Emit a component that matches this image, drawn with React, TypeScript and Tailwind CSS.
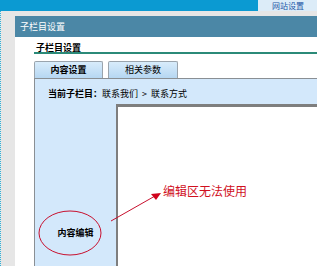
import React from 'react';

const font = { fontFamily: '"Noto Sans CJK SC", "Liberation Sans", sans-serif' };

const App: React.FC = () => {
  return (
    <div className="relative w-[317px] h-[266px] overflow-hidden bg-[#e6e6e6] text-[9px] text-black" style={font}>
      {/* top bar */}
      <div className="flex h-[11px] bg-[#0b9ad2]">
        <div className="flex-1" />
        <div className="w-[59px] bg-[#dcecf8] text-[8px] leading-[11px] text-[#2356a6] pl-[14px]">网站设置</div>
      </div>

      <div className="flex h-[255px]">
        <div className="w-[15px] border-l border-dotted border-[#2fb0d8]" />
        <div className="flex-1 flex flex-col mt-[5px]">
          <div className="h-[21px] bg-[#4b87a6] text-white text-[9px] leading-[21px] pl-[5px]">子栏目设置</div>
          <div className="flex-1 bg-white pl-[19px] flex flex-col">
            <div className="mt-[6px] h-[11px] border-b-2 border-[#2b8a78] text-[9px] font-bold leading-[9px] pl-[2px]">
              子栏目设置
            </div>
            <div className="flex gap-[5px] mt-[7px] h-[17px]">
              <div className="w-[69px] border border-b-0 border-[#9aa4ad] rounded-t-[2px] bg-gradient-to-b from-[#d8ecfb] to-[#b6d7f2] text-center font-bold leading-[16px]">
                内容设置
              </div>
              <div className="w-[70px] border border-b-0 border-[#9aa4ad] rounded-t-[2px] bg-gradient-to-b from-[#d8ecfb] to-[#b6d7f2] text-center leading-[16px]">
                相关参数
              </div>
            </div>
            <div className="flex-1 flex flex-col border-t border-l border-[#8a8f94] bg-[#d3e8fb]">
              <div className="h-[25px] pl-[13px] pt-[10px] leading-[10px]">
                <span className="font-bold">当前子栏目：</span>
                <span>联系我们&nbsp;&nbsp;&gt;&nbsp;&nbsp;联系方式</span>
              </div>
              <div className="flex-1 flex">
                <div className="w-[81px] flex flex-col items-center justify-end pb-[27px]">
                  <span className="font-bold">内容编辑</span>
                </div>
                <div className="flex-1 bg-white border-t-[3px] border-l-[2px] border-[#7e7e7e]" />
              </div>
            </div>
          </div>
        </div>
      </div>

      {/* annotation */}
      <svg className="absolute left-0 top-0" width="317" height="266" viewBox="0 0 317 266">
        <ellipse cx="70" cy="233" rx="31" ry="22" fill="none" stroke="#c8102e" strokeWidth="1" />
        <line x1="111" y1="221" x2="155" y2="196" stroke="#c8102e" strokeWidth="1" />
        <polygon points="161,193 151,194 156,200" fill="#d0021b" />
      </svg>
      <div className="absolute left-[163px] top-[182px] text-[12px] leading-[17px] text-[#d0101e]">编辑区无法使用</div>
    </div>
  );
};

export default App;
